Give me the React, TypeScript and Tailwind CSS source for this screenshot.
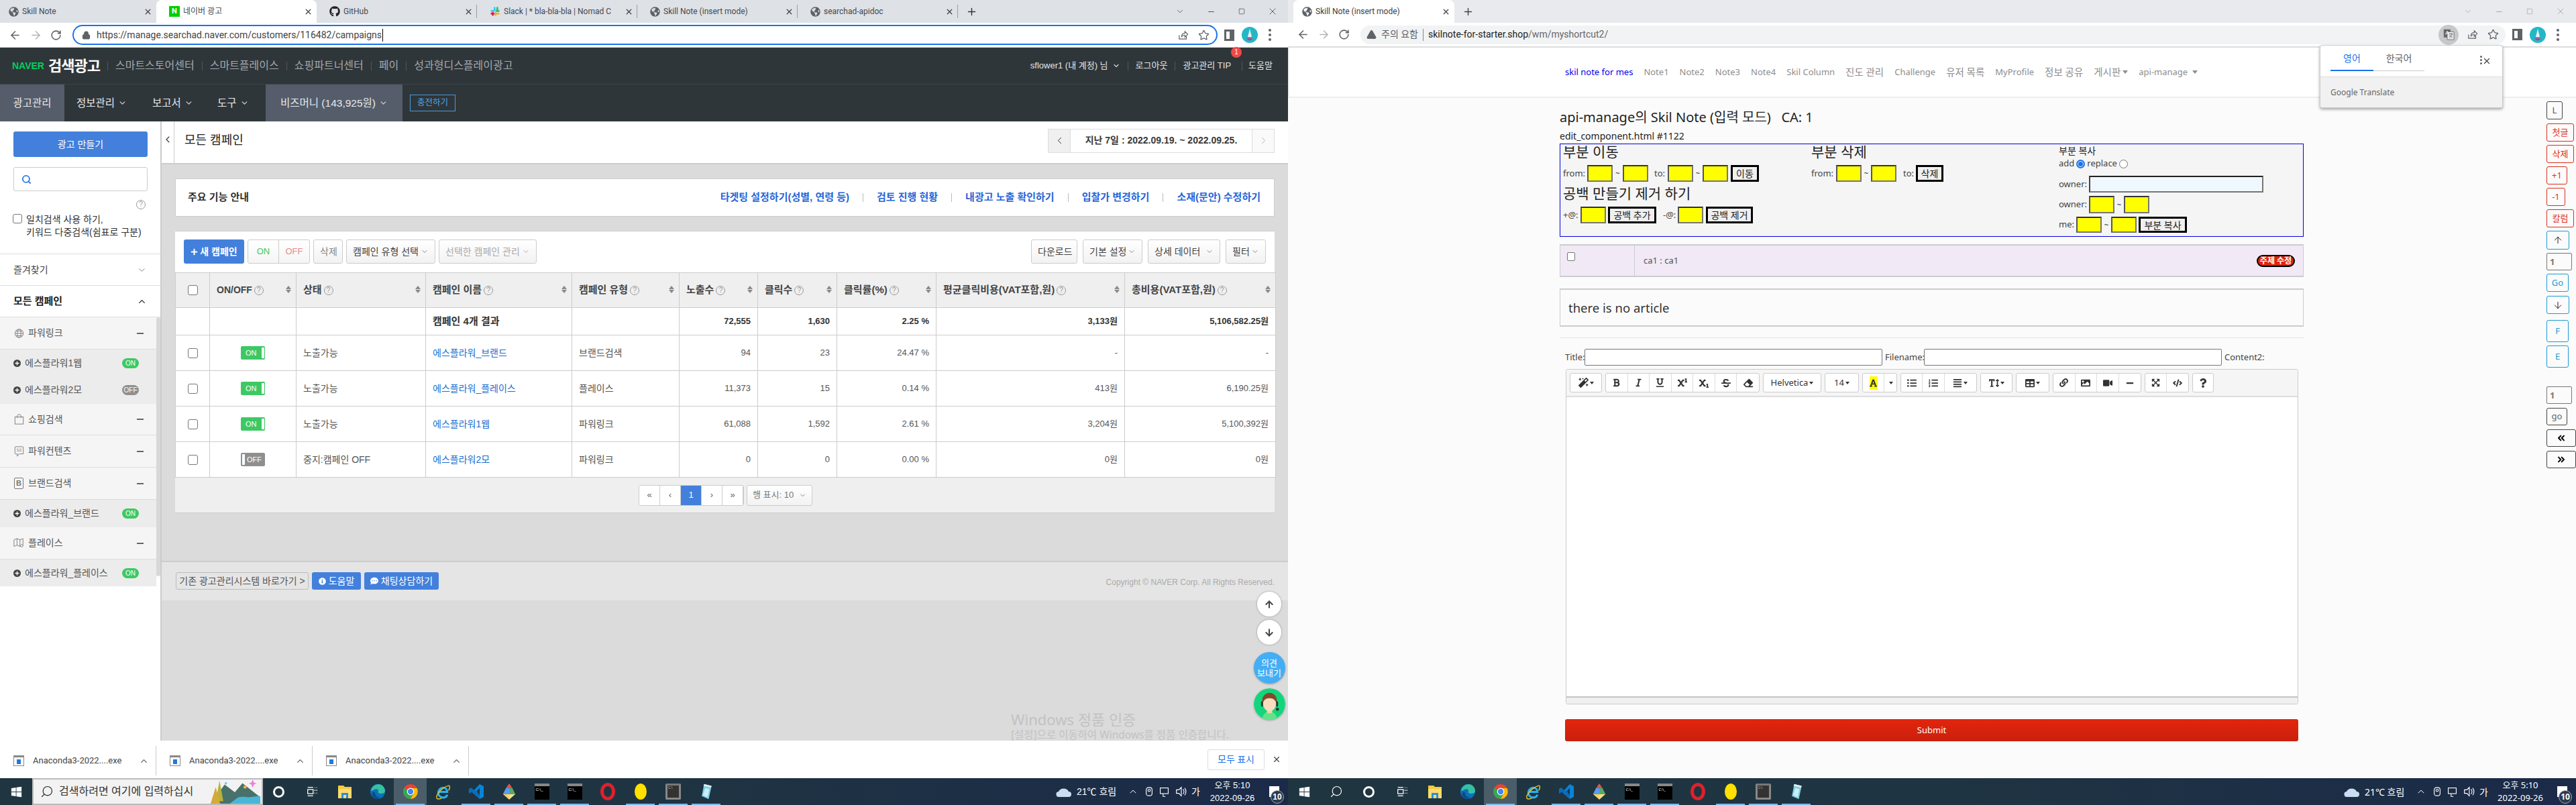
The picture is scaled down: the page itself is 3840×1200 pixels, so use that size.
// App.tsx
import React from 'react';
import { ArrowLeft, ArrowRight, RotateCw, Lock, Star, X, Plus, ChevronDown, ChevronUp, ChevronLeft, ChevronRight, ChevronsLeft, ChevronsRight, Search, TriangleAlert, ArrowUp, ArrowDown, Minus, Square } from 'lucide-react';
import { FaGlobeAmericas, FaGithub, FaMagic, FaBold, FaItalic, FaUnderline, FaSuperscript, FaSubscript, FaStrikethrough, FaEraser, FaFont, FaListUl, FaListOl, FaAlignJustify, FaTextHeight, FaTable, FaLink, FaImage, FaVideo, FaMinus, FaExpandArrowsAlt, FaCode, FaQuestion, FaPlus, FaCommentDots, FaInfoCircle } from 'react-icons/fa';

const Globe = () => <FaGlobeAmericas className="w-[15px] h-[15px] text-[#5f6368] shrink-0" />;

const SlackLogo = () => (
  <svg viewBox="0 0 24 24" className="w-[16px] h-[16px] shrink-0">
    <rect x="9" y="2" width="4" height="9" rx="2" fill="#36c5f0" />
    <rect x="2" y="9" width="9" height="4" rx="2" fill="#36c5f0" />
    <rect x="15" y="2" width="4" height="9" rx="2" fill="#2eb67d" />
    <rect x="13" y="9" width="9" height="4" rx="2" fill="#2eb67d" />
    <rect x="11" y="13" width="4" height="9" rx="2" fill="#ecb22e" />
    <rect x="13" y="15" width="9" height="4" rx="2" fill="#ecb22e" />
    <rect x="5" y="13" width="4" height="9" rx="2" fill="#e01e5a" />
    <rect x="2" y="15" width="9" height="4" rx="2" fill="#e01e5a" />
  </svg>
);

const NaverIcon = () => (
  <span className="w-[16px] h-[16px] bg-[#03cf00] text-white text-[11px] font-bold flex items-center justify-center shrink-0">N</span>
);

const Tab = ({ icon, title, active, sep }: { icon: React.ReactNode; title: string; active?: boolean; sep?: boolean }) => (
  <div className={`relative h-full w-[239px] flex items-center pl-[19px] pr-[6px] gap-[5px] text-[12px] text-[#45494e] ${active ? 'bg-white rounded-t-[8px] text-[#3c4043]' : ''}`}>
    {icon}
    <span className="flex-1 overflow-hidden whitespace-nowrap">{title}</span>
    <X size={13} strokeWidth={2.4} className="text-[#444] shrink-0" />
    {sep && <span className="absolute right-0 top-[7px] h-[20px] w-px bg-[#9aa0a6]" />}
  </div>
);

const WinControls = ({ muted }: { muted?: boolean }) => (
  <div className={`ml-auto flex items-center h-full ${muted ? 'text-[#9a9a9a]' : 'text-[#333]'}`}>
    <span className="w-[46px] flex justify-center"><ChevronDown size={14} strokeWidth={1.2} /></span>
    <span className="w-[46px] flex justify-center"><Minus size={13} strokeWidth={1.5} /></span>
    <span className="w-[46px] flex justify-center"><Square size={10} strokeWidth={1.4} /></span>
    <span className="w-[46px] flex justify-center"><X size={16} strokeWidth={1.1} /></span>
  </div>
);

const Avatar = () => (
  <svg viewBox="0 0 24 24" className="w-[24px] h-[24px] shrink-0">
    <circle cx="12" cy="12" r="12" fill="#22b8c8" />
    <path d="M12 3 L15 15 L9 15 Z" fill="#eef3f0" />
    <path d="M7 17 L17 17 L14 20 L10 20 Z" fill="#c0408a" />
  </svg>
);

const ShareIcon = () => (
  <svg viewBox="0 0 24 24" className="w-[17px] h-[17px] text-[#5f6368]" fill="none" stroke="currentColor" strokeWidth="1.7">
    <path d="M4 12v8h15v-6" />
    <path d="M9 15c0-5 3-7 7-7V4l6 6-6 6v-4c-3 0-5 1-7 3z" />
  </svg>
);

const TranslateIcon = () => (
  <svg viewBox="0 0 20 20" className="w-[17px] h-[17px]">
    <rect x="1" y="1" width="12" height="14" rx="1" fill="#666" />
    <rect x="7" y="5" width="12" height="14" rx="1" fill="#e8e8e8" stroke="#666" />
    <path d="M4 10l3-6 3 6M5 8h4" fill="none" stroke="#fff" strokeWidth="1.1" />
    <path d="M10 9h7M13.5 8v1M16 9c-1 3-3 5-5 6M11 11c1 2 3 3 5 4" fill="none" stroke="#555" strokeWidth="1" />
  </svg>
);

const AddressRight = ({ translate }: { translate?: boolean }) => (
  <div className="flex items-center gap-[14px] pr-[10px] text-[#5f6368]">
    {translate && (
      <span className="w-[30px] h-[30px] -mx-[2px] rounded-full bg-[#c6c8ca] flex items-center justify-center">
        <TranslateIcon />
      </span>
    )}
    <ShareIcon />
    <Star size={17} strokeWidth={1.8} />
  </div>
);

const AddressTail = () => (
  <div className="flex items-center gap-[11px] pl-[10px] pr-[10px] w-[105px] h-full">
    <span className="w-[15px] h-[17px] border-[3px] border-[#5f6368] border-r-[7px] shrink-0" />
    <Avatar />
    <span className="flex flex-col gap-[3px] ml-[5px]">
      <i className="w-[4px] h-[4px] rounded-full bg-[#5f6368]" />
      <i className="w-[4px] h-[4px] rounded-full bg-[#5f6368]" />
      <i className="w-[4px] h-[4px] rounded-full bg-[#5f6368]" />
    </span>
  </div>
);

const NavArrows = () => (
  <div className="flex items-center gap-[12px] pl-[13px] w-[108px] text-[#5f6368]">
    <ArrowLeft size={19} strokeWidth={2} />
    <ArrowRight size={19} strokeWidth={2} className="text-[#b3b5b8]" />
    <RotateCw size={17} strokeWidth={2.2} />
  </div>
);

// ---- taskbar ----
const WinLogo = () => (
  <svg viewBox="0 0 20 20" className="w-[17px] h-[17px]" fill="#fff">
    <path d="M1 3.5 9 2.3V9.5H1zM10 2.1 19 1V9.5H10zM1 10.5H9V17.7L1 16.5zM10 10.5H19V19L10 17.9z" />
  </svg>
);
const TaskView = () => (
  <svg viewBox="0 0 20 20" className="w-[18px] h-[18px]" fill="none" stroke="#fff" strokeWidth="1.4">
    <path d="M3 3h9M3 17h9" /><rect x="3" y="6.5" width="9" height="7" /><path d="M15 3v1M15 7v2M15 12v1M18 3v1M18 7v2M18 12v1" />
  </svg>
);
const Explorer = () => (
  <svg viewBox="0 0 24 24" className="w-[24px] h-[24px]">
    <path d="M2 3h8l2 2h10v17H2z" fill="#f8c93e" />
    <rect x="2" y="8" width="20" height="14" fill="#fcdc73" />
    <rect x="7" y="14" width="10" height="8" fill="#2b8fd8" />
    <rect x="10" y="17" width="4" height="5" fill="#fcdc73" />
  </svg>
);
const Edge = () => (
  <svg viewBox="0 0 24 24" className="w-[24px] h-[24px]">
    <circle cx="12" cy="12" r="11" fill="#0c6fb8" />
    <path d="M2 11C3 4 9 1 13 1c6 0 10 5 10 10 0 3-3 4-6 4-3 0-5-1-4-3 1-3-3-5-6-3-2 1-4 2-5 2z" fill="#36c1a3" />
    <path d="M8 14c0 4 3 7 8 7-2 2-5 2-7 1-4-1-6-5-5-8 1-2 3-2 4 0z" fill="#0b4a8a" />
  </svg>
);
const Chrome = () => (
  <svg viewBox="0 0 24 24" className="w-[24px] h-[24px]">
    <circle cx="12" cy="12" r="11" fill="#ea4335" />
    <path d="M12 12 L2.5 6.5 A11 11 0 0 0 12 23 L17.5 14z" fill="#34a853" />
    <path d="M12 7h9.5A11 11 0 0 1 12 23l5-9z" fill="#fbbc05" />
    <circle cx="12" cy="12" r="5.4" fill="#fff" />
    <circle cx="12" cy="12" r="4.2" fill="#4285f4" />
  </svg>
);
const Gem = () => (
  <svg viewBox="0 0 24 28" className="w-[24px] h-[26px]">
    <path d="M12 1l5 7H7z" fill="#e8514a" />
    <path d="M7 8h5v10H2z" fill="#5b9cf0" />
    <path d="M12 8h5l5 10H12z" fill="#58a866" />
    <path d="M2 18h10v9z" fill="#f5d36b" />
    <path d="M12 18h10l-10 9z" fill="#f0e18e" />
  </svg>
);
const Cmd = () => (
  <span className="w-[22px] h-[24px] bg-black border-t-[4px] border-[#888] flex px-[2px] pt-[2px]">
    <span className="text-[6px] text-white leading-none">C:\_</span>
  </span>
);
const Opera = () => (
  <span className="w-[22px] h-[26px] rounded-[50%] border-[5px] border-[#e0202c]" />
);
const Yellow = () => <span className="w-[18px] h-[24px] rounded-[50%] bg-[#ffe000]" />;
const GrayApp = () => (
  <span className="w-[23px] h-[24px] bg-[#333] rounded-[2px] border-[3px] border-[#888] border-t-[#777] flex p-[1px]">
    <span className="text-[5px] text-[#bbb] leading-none">C:\</span>
  </span>
);
const Notepad = () => (
  <svg viewBox="0 0 24 28" className="w-[24px] h-[24px]">
    <path d="M8 1 L21 4 L16 27 L4 22z" fill="#7fd0e4" />
    <path d="M8 1 L21 4 L20 7 L7 4z" fill="#e8e8e8" />
    <path d="M10 8 L17 10 L14 24 L6 20z" fill="#c9eef6" />
  </svg>
);
const IE = () => (
  <svg viewBox="0 0 24 24" className="w-[25px] h-[25px]" fill="none">
    <path d="M5 12h13c0-4-3-6-6-6s-7 3-7 7 3 7 7 7c3 0 5-1 6-4" stroke="#2ab0ea" strokeWidth="3" />
    <path d="M3 21C1 18 9 6 20 3c2 0 2 3 0 7M3 21c1 2 5 1 7 0" stroke="#f2c21a" strokeWidth="1.4" />
  </svg>
);
const VS = () => (
  <svg viewBox="0 0 24 24" className="w-[24px] h-[26px]">
    <path d="M17 1 23 4V20L17 23 6 13z" fill="#0a84d8" />
    <path d="M17 6.5V17.5L9.5 12zM1 8l3-2 13 11v6L5 12.5 2 15 1 14z" fill="#0a6cbc" />
    <path d="M17 6.5V17.5L13 12z" fill="#1f3540" />
  </svg>
);

const Task = ({ children, run, active }: { children: React.ReactNode; run?: boolean; active?: boolean }) => (
  <div className={`relative w-[49px] h-full flex items-center justify-center shrink-0 ${active ? 'bg-[#4a5d68]' : ''}`}>
    {children}
    {run && <span className="absolute bottom-0 left-[3px] right-[3px] h-[2px] bg-[#76b9ed]" />}
  </div>
);

const TaskApps = () => (
  <>
    <Task><span className="w-[17px] h-[17px] rounded-full border-[3px] border-white" /></Task>
    <Task><TaskView /></Task>
    <Task><Explorer /></Task>
    <Task><Edge /></Task>
    <Task run active><Chrome /></Task>
    <Task><IE /></Task>
    <Task run><VS /></Task>
    <Task run><Gem /></Task>
    <Task run><Cmd /></Task>
    <Task run><Cmd /></Task>
    <Task><Opera /></Task>
    <Task run><Yellow /></Task>
    <Task run><GrayApp /></Task>
    <Task run><Notepad /></Task>
  </>
);

const Tray = () => (
  <div className="ml-auto flex items-center h-full text-white shrink-0 pr-[3px]">
    <svg viewBox="0 0 24 18" className="w-[24px] h-[18px] mr-[7px]" fill="#c9def2"><path d="M5 17a4 4 0 0 1-1-8 8 7 0 0 1 15 0 4 4 0 0 1 0 8z" /></svg>
    <span className="text-[14px] w-[76px] whitespace-nowrap">21℃ 흐림</span>
    <ChevronUp size={16} strokeWidth={1.5} className="mr-[9px]" />
    <svg viewBox="0 0 16 20" className="w-[14px] h-[18px] mr-[7px]" fill="none" stroke="#fff" strokeWidth="1.3"><rect x="3" y="3" width="10" height="14" rx="4" /><circle cx="8" cy="8" r="2" /></svg>
    <svg viewBox="0 0 20 20" className="w-[17px] h-[17px] mr-[7px]" fill="none" stroke="#fff" strokeWidth="1.3"><rect x="3" y="3" width="14" height="10" /><path d="M8 13v5h4" /></svg>
    <svg viewBox="0 0 20 20" className="w-[18px] h-[18px] mr-[7px]" fill="none" stroke="#fff" strokeWidth="1.3"><path d="M3 7h4l4-4v14l-4-4H3zM14 6c2 2 2 6 0 8M16.5 4c3 3 3 9 0 12" /></svg>
    <span className="text-[14px] w-[16px]">가</span>
    <div className="w-[88px] flex flex-col items-center text-[13px] leading-[19px] ml-[1px]">
      <span>오후 5:10</span>
      <span>2022-09-26</span>
    </div>
    <div className="relative w-[36px] h-full flex items-center justify-center">
      <span className="w-[15px] h-[16px] bg-white" />
      <span className="absolute right-[3px] bottom-[2px] w-[20px] h-[20px] rounded-full bg-[#2a3a52] border border-[#aaa] text-[12px] font-bold flex items-center justify-center">10</span>
    </div>
  </div>
);

const Landscape = () => (
  <svg viewBox="0 0 78 40" className="w-[78px] h-[38px] self-end shrink-0">
    <path d="M0 40 L22 10 L38 22 L50 8 L78 30 V40z" fill="#48716b" />
    <path d="M30 40 C45 30 40 28 60 30 L78 28 V40z" fill="#49b6d8" />
    <path d="M8 36 L14 4 L20 36z" fill="#b9b23a" />
    <path d="M0 40 L8 14 L15 40z" fill="#d6a93a" />
    <path d="M66 2l2 5 4 1-4 2-2 5-2-5-4-2 4-1z" fill="#f07be0" />
    <circle cx="54" cy="14" r="2.5" fill="#f1b02e" />
    <circle cx="24" cy="8" r="2" fill="#7cc7f0" />
  </svg>
);

const Bar = ({ children }: { children: React.ReactNode }) => (
  <div className="h-[40px] flex items-stretch bg-gradient-to-r from-[#1f3540] via-[#1f3442] to-[#1b2a48] shrink-0">{children}</div>
);

// ---- left window parts ----
const Q = ({ className = '' }: { className?: string }) => (
  <span className={`inline-flex items-center justify-center w-[14px] h-[14px] rounded-full border border-[#999] text-[#999] text-[10px] font-normal leading-none ${className}`}>?</span>
);

const Sort = () => (
  <span className="absolute right-[7px] top-[19px] flex flex-col gap-[1px]">
    <i className="w-0 h-0 border-x-[4px] border-x-transparent border-b-[5px] border-b-[#888]" />
    <i className="w-0 h-0 border-x-[4px] border-x-transparent border-t-[5px] border-t-[#888]" />
  </span>
);

const Check = () => <span className="block mx-auto w-[15px] h-[15px] border border-[#777] rounded-[3px] bg-white" />;

const Toggle = ({ on }: { on: boolean }) => on ? (
  <span className="mx-auto w-[36px] h-[20px] bg-[#3ec864] rounded-[2px] flex items-center text-white text-[11px] pl-[7px] gap-[3px]">
    ON<i className="w-[4px] h-[16px] bg-white rounded-[1px] ml-auto mr-[1px]" />
  </span>
) : (
  <span className="mx-auto w-[36px] h-[20px] bg-[#8f8f8f] rounded-[2px] flex items-center text-white text-[11px] pl-[2px] gap-[3px]">
    <i className="w-[4px] h-[16px] bg-white rounded-[1px]" />OFF
  </span>
);

const ToolBtn = ({ children, w, muted }: { children: React.ReactNode; w: string; muted?: boolean }) => (
  <div className={`${w} h-[36px] border border-[#ccc] rounded-[3px] bg-gradient-to-b from-white to-[#f2f2f2] flex items-center justify-between px-[9px] text-[14px] shrink-0 ${muted ? 'text-[#aaa]' : 'text-[#444]'}`}>
    {children}
  </div>
);

const Head = ({ children }: { children: React.ReactNode }) => (
  <th className="relative border border-[#ccc] bg-[#efefef] px-[10px] text-[15px] font-bold text-[#444] whitespace-nowrap text-left">
    <span className="inline-flex items-center gap-[3px]">{children}<Q /></span>
    <Sort />
  </th>
);

const rows = [
  { on: true, state: '노출가능', name: '에스플라워_브랜드', type: '브랜드검색', imp: '94', clk: '23', ctr: '24.47 %', avg: '-', cost: '-' },
  { on: true, state: '노출가능', name: '에스플라워_플레이스', type: '플레이스', imp: '11,373', clk: '15', ctr: '0.14 %', avg: '413원', cost: '6,190.25원' },
  { on: true, state: '노출가능', name: '에스플라워1웹', type: '파워링크', imp: '61,088', clk: '1,592', ctr: '2.61 %', avg: '3,204원', cost: '5,100,392원' },
  { on: false, state: '중지:캠페인 OFF', name: '에스플라워2모', type: '파워링크', imp: '0', clk: '0', ctr: '0.00 %', avg: '0원', cost: '0원' },
];

const Td = ({ children, right, bold }: { children?: React.ReactNode; right?: boolean; bold?: boolean }) => (
  <td className={`border border-[#ccc] px-[10px] whitespace-nowrap bg-white ${right ? 'text-right text-[13px]' : 'text-[14px]'} ${bold ? 'font-bold text-[#333]' : 'text-[#555]'}`}>{children}</td>
);

const CampaignTable = () => (
  <table className="w-[1640px] table-fixed border-collapse">
    <colgroup>
      <col className="w-[51px]" /><col className="w-[129px]" /><col className="w-[193px]" /><col className="w-[218px]" /><col className="w-[160px]" />
      <col className="w-[117px]" /><col className="w-[118px]" /><col className="w-[148px]" /><col className="w-[281px]" /><col className="w-[225px]" />
    </colgroup>
    <thead>
      <tr className="h-[52px]">
        <th className="border border-[#ccc] bg-[#efefef]"><Check /></th>
        <Head><span className="text-[14px]">ON/OFF</span></Head><Head>상태</Head><Head>캠페인 이름</Head><Head>캠페인 유형</Head>
        <Head>노출수</Head><Head>클릭수</Head><Head>클릭률(%)</Head><Head>평균클릭비용(VAT포함,원)</Head><Head>총비용(VAT포함,원)</Head>
      </tr>
    </thead>
    <tbody>
      <tr className="h-[41px]">
        <Td /><Td /><Td /><td className="border border-[#ccc] bg-white px-[10px] text-[15px] font-bold text-[#333] whitespace-nowrap">캠페인 4개 결과</td><Td />
        <Td right bold>72,555</Td><Td right bold>1,630</Td><Td right bold>2.25 %</Td><Td right bold>3,133원</Td><Td right bold>5,106,582.25원</Td>
      </tr>
      {rows.map((r) => (
        <tr key={r.name} className="h-[53px]">
          <Td><Check /></Td>
          <td className="border border-[#ccc] bg-white"><div className="flex"><Toggle on={r.on} /></div></td>
          <Td>{r.state}</Td>
          <td className="border border-[#ccc] bg-white px-[10px] text-[14px] text-[#1a6fd0] whitespace-nowrap">{r.name}</td>
          <Td>{r.type}</Td>
          <Td right>{r.imp}</Td><Td right>{r.clk}</Td><Td right>{r.ctr}</Td><Td right>{r.avg}</Td><Td right>{r.cost}</Td>
        </tr>
      ))}
    </tbody>
  </table>
);

const CatIcon = ({ kind }: { kind: string }) => {
  if (kind === 'globe') return <svg viewBox="0 0 16 18" className="w-[15px] h-[16px]" fill="none" stroke="#777"><circle cx="8" cy="9" r="7" /><ellipse cx="8" cy="9" rx="3" ry="7" /><path d="M1 9h14M2 5h12M2 13h12" /></svg>;
  if (kind === 'bag') return <svg viewBox="0 0 16 18" className="w-[15px] h-[16px]" fill="none" stroke="#777"><rect x="1" y="5" width="14" height="12" /><path d="M5 7V3a3 2 0 0 1 6 0v4" /></svg>;
  if (kind === 'note') return <svg viewBox="0 0 16 18" className="w-[15px] h-[16px]" fill="none" stroke="#777"><path d="M2 1h12a1 1 0 0 1 1 1v11H8l-3 4v-4H2a1 1 0 0 1-1-1V2a1 1 0 0 1 1-1z" /><path d="M4 5h3M9 5h3M4 8h8" /></svg>;
  if (kind === 'brand') return <span className="w-[14px] h-[17px] border border-[#777] rounded-[2px] text-[#777] text-[11px] leading-[15px] text-center font-bold">B</span>;
  return <svg viewBox="0 0 18 18" className="w-[17px] h-[16px]" fill="none" stroke="#777"><path d="M1 3l5-2 5 2 5-2v11l-5 2-5-2-5 2zM6 1v11M11 3v11" /><circle cx="14" cy="13" r="2" fill="#fff" /></svg>;
};

const Cat = ({ kind, label, h }: { kind: string; label: string; h: string }) => (
  <div className={`${h} flex items-center pl-[20px] pr-[19px] gap-[6px] border-b border-[#ddd] text-[14px] text-[#555]`}>
    <span className="w-[16px] flex justify-center"><CatIcon kind={kind} /></span>
    <span className="flex-1">{label}</span>
    <span className="w-[10px] h-[2px] bg-[#666]" />
  </div>
);

const Camp = ({ label, on, h }: { label: string; on: boolean; h: string }) => (
  <div className={`${h} flex items-center pl-[20px] pr-[26px] bg-[#ececec] text-[14px] text-[#555]`}>
    <span className="w-[11px] h-[11px] rounded-full bg-[#444] text-white flex items-center justify-center mr-[6px]"><FaPlus className="w-[7px] h-[7px]" /></span>
    <span className="flex-1">{label}</span>
    <span className={`w-[25px] h-[15px] rounded-full text-white text-[10px] leading-[15px] text-center ${on ? 'bg-[#3ec864]' : 'bg-[#8f8f8f]'}`}>{on ? 'ON' : 'OFF'}</span>
  </div>
);

const Sidebar = () => (
  <aside className="w-[241px] shrink-0 bg-white border-r-2 border-[#ccc] h-full">
    <div className="h-[198px] px-[20px] pt-[15px] relative border-b border-[#ddd]">
      <div className="h-[38px] w-[200px] rounded-[3px] bg-[#4280dc] text-white text-[14px] flex items-center justify-center">광고 만들기</div>
      <div className="mt-[15px] h-[36px] w-[200px] rounded-[3px] border border-[#ccc] flex items-center pl-[11px]">
        <Search size={15} strokeWidth={3} className="text-[#2e7be0]" />
      </div>
      <div className="flex justify-end mt-[13px] pr-[2px]"><Q /></div>
      <div className="flex mt-[6px] -ml-[1px]">
        <span className="w-[14px] h-[14px] mt-[1px] border border-[#777] rounded-[3px] shrink-0" />
        <span className="ml-[6px] text-[14px] leading-[19px] text-[#333] whitespace-nowrap">일치검색 사용 하기,<br />키워드 다중검색(쉼표로 구분)</span>
      </div>
    </div>
    <div className="h-[47px] flex items-center justify-between pl-[20px] pr-[20px] border-b border-[#ddd] text-[14px] text-[#444]">
      즐겨찾기<ChevronDown size={15} strokeWidth={1.5} className="text-[#777]" />
    </div>
    <div className="h-[47px] flex items-center justify-between pl-[20px] pr-[20px] border-b border-[#ddd] text-[15px] font-bold text-[#222]">
      모든 캠페인<ChevronUp size={15} strokeWidth={2} className="text-[#222]" />
    </div>
    <div className="flex">
      <div className="w-[234px] bg-[#f5f5f5]">
        <Cat kind="globe" label="파워링크" h="h-[48px]" />
        <Camp label="에스플라워1웹" on h="h-[40px]" />
        <Camp label="에스플라워2모" on={false} h="h-[41px]" />
        <Cat kind="bag" label="쇼핑검색" h="h-[47px]" />
        <Cat kind="note" label="파워컨텐츠" h="h-[48px]" />
        <Cat kind="brand" label="브랜드검색" h="h-[48px]" />
        <Camp label="에스플라워_브랜드" on h="h-[41px]" />
        <Cat kind="map" label="플레이스" h="h-[48px]" />
        <Camp label="에스플라워_플레이스" on h="h-[40px]" />
      </div>
      <div className="w-[6px] h-[386px] bg-[#d8d8d8] rounded-[3px]" />
    </div>
  </aside>
);

const Divider = () => <span className="w-px h-[13px] bg-[#555] mx-[11px]" />;

const Caret = () => <ChevronDown size={13} strokeWidth={2.6} className="ml-[5px] text-[#ccc]" />;

const PageBtn = ({ children, active }: { children: React.ReactNode; active?: boolean }) => (
  <span className={`w-[31px] h-full flex items-center justify-center text-[13px] border-r border-[#ccc] ${active ? 'bg-[#4280dc] text-white' : 'bg-white text-[#666]'}`}>{children}</span>
);

const Bubble = ({ children, className = '' }: { children: React.ReactNode; className?: string }) => (
  <span className={`w-[36px] h-[37px] rounded-full bg-white shadow-[0_0_3px_rgba(0,0,0,0.35)] flex items-center justify-center text-[#444] ${className}`}>{children}</span>
);

const NaverWindow = () => (
  <div className="w-[1920px] h-full flex flex-col shrink-0 font-[family-name:'Liberation_Sans','Noto_Sans_CJK_KR',sans-serif]">
    <div className="h-[34px] bg-[#dee1e6] flex items-end shrink-0 font-[family-name:'Roboto','Noto_Sans_CJK_KR',sans-serif]">
      <div className="-ml-[6px] flex h-full items-stretch">
        <Tab icon={<Globe />} title="Skill Note" />
        <Tab icon={<NaverIcon />} title="네이버 광고" active />
        <Tab icon={<FaGithub className="w-[16px] h-[16px] text-[#222]" />} title="GitHub" sep />
        <Tab icon={<SlackLogo />} title="Slack | * bla-bla-bla | Nomad C" sep />
        <Tab icon={<Globe />} title="Skill Note (insert mode)" sep />
        <Tab icon={<Globe />} title="searchad-apidoc" sep />
      </div>
      <div className="self-center ml-[12px] text-[#333]"><Plus size={17} strokeWidth={2} /></div>
      <WinControls />
    </div>
    <div className="h-[37px] bg-white flex items-center border-b border-[#d8d8d8] shrink-0 font-[family-name:'Roboto','Noto_Sans_CJK_KR',sans-serif]">
      <NavArrows />
      <div className="flex-1 h-[30px] border-2 border-[#1a73e8] rounded-full flex items-center pl-[12px]">
        <Lock size={13} strokeWidth={2.6} className="text-[#5f6368] mr-[9px]" fill="#5f6368" />
        <span className="text-[14px] text-[#444] border-r border-black pr-px leading-[19px]">https://manage.searchad.naver.com/customers/116482/campaigns</span>
        <div className="ml-auto"><AddressRight /></div>
      </div>
      <AddressTail />
    </div>
    <header className="h-[55px] bg-[#2f363a] border-b border-[#3c4347] flex items-center pl-[18px] pr-[23px] shrink-0">
      <span className="text-[#03cf5d] font-[family-name:'Liberation_Sans',sans-serif] font-bold text-[14px] mr-[6px]">NAVER</span>
      <span className="text-white font-bold text-[22px] tracking-[-1px] mr-[11px]">검색광고</span>
      <div className="flex items-center text-[#a4a9ac] text-[16px]">
        <span className="w-px h-[13px] bg-[#555] mr-[11px]" />스마트스토어센터<Divider />스마트플레이스<Divider />쇼핑파트너센터<Divider />페이<Divider />성과형디스플레이광고
      </div>
      <div className="ml-auto flex items-center text-[#e2e4e5] text-[13px]">
        sflower1 (내 계정) 님<ChevronDown size={12} strokeWidth={2.6} className="ml-[6px] text-[#ccc]" /><Divider />로그아웃<Divider />
        <span className="relative mr-[16px]">광고관리 TIP<span className="absolute -right-[16px] -top-[18px] w-[16px] h-[16px] rounded-full bg-[#f04848] text-white text-[10px] leading-[16px] text-center">1</span></span>
        <span className="w-px h-[13px] bg-[#555] mr-[9px]" />도움말
      </div>
    </header>
    <nav className="h-[55px] bg-[#2f363a] flex items-stretch text-[#e8e9ea] text-[15.5px] shrink-0">
      <span className="w-[96px] bg-[#555d6b] flex items-center justify-center">광고관리</span>
      <span className="ml-[18px] w-[103px] flex items-center">정보관리<Caret /></span>
      <span className="ml-[10px] w-[87px] flex items-center">보고서<Caret /></span>
      <span className="w-[72px] ml-[10px] flex items-center">도구<Caret /></span>
      <span className="w-[204px] bg-[#555d6b] flex items-center justify-center whitespace-nowrap">비즈머니 (143,925원)<Caret /></span>
      <span className="ml-[11px] self-center w-[68px] h-[25px] border border-[#4a9bd8] text-[#4fa8e6] text-[12.5px] flex items-center justify-center">충전하기</span>
    </nav>
    <div className="flex h-[923px] shrink-0">
      <Sidebar />
      <main className="relative flex-1 bg-[#dbdbdb] flex flex-col overflow-hidden">
        <div className="h-[64px] bg-white border-b-2 border-[#ccc] flex items-center shrink-0">
          <div className="w-[19px] h-full border-r border-[#ccc] flex items-center justify-center pb-[8px]"><ChevronLeft size={16} strokeWidth={1.6} className="text-[#333]" /></div>
          <h1 className="ml-[15px] pb-[5px] text-[18px] text-[#222]">모든 캠페인</h1>
          <div className="ml-auto mr-[20px] mb-[5px] w-[338px] h-[36px] border border-[#ddd] flex items-stretch">
            <span className="w-[33px] bg-[#f0f0f0] flex items-center justify-center border-r border-[#ddd]"><ChevronLeft size={17} strokeWidth={1.4} className="text-[#333]" /></span>
            <span className="flex-1 flex items-center justify-center text-[14px] font-bold text-[#3a3a3a]">지난 7일 : 2022.09.19. ~ 2022.09.25.</span>
            <span className="w-[33px] bg-[#fafafa] flex items-center justify-center border-l border-[#ddd]"><ChevronRight size={17} strokeWidth={1.2} className="text-[#aaa]" /></span>
          </div>
        </div>
        <section className="mx-[20px] mt-[21px] h-[57px] bg-white border border-[#ccc] rounded-[2px] flex items-center pl-[18px] pr-[20px] shrink-0">
          <span className="text-[15px] font-bold text-[#333]">주요 기능 안내</span>
          <div className="ml-auto flex items-center text-[15px] font-bold text-[#2866d8]">
            타겟팅 설정하기(성별, 연령 등)
            <span className="w-px h-[13px] bg-[#bbb] mx-[20px]" />검토 진행 현황
            <span className="w-px h-[13px] bg-[#bbb] mx-[20px]" />내광고 노출 확인하기
            <span className="w-px h-[13px] bg-[#bbb] mx-[20px]" />입찰가 변경하기
            <span className="w-px h-[13px] bg-[#bbb] mx-[20px]" />소재(문안) 수정하기
          </div>
        </section>
        <section className="mx-[20px] mt-[21px] bg-[#efefef] border-t border-b border-[#ccc] rounded-[2px] shrink-0">
          <div className="h-[61px] bg-white flex items-start pt-[12px] pl-[13px] pr-[13px] gap-[5px]">
            <div className="w-[90px] h-[36px] rounded-[3px] bg-[#4280dc] text-white text-[14px] font-bold flex items-center justify-center gap-[3px] shrink-0"><FaPlus className="w-[11px] h-[11px]" />새 캠페인</div>
            <div className="w-[93px] h-[36px] border border-[#ccc] rounded-[3px] bg-gradient-to-b from-white to-[#f5f5f5] flex text-[13px] shrink-0">
              <span className="w-[46px] border-r border-[#ccc] text-[#3ec864] flex items-center justify-center">ON</span>
              <span className="flex-1 text-[#e98a8a] flex items-center justify-center">OFF</span>
            </div>
            <ToolBtn w="w-[44px]" muted><span className="mx-auto text-[#888] whitespace-nowrap">삭제</span></ToolBtn>
            <ToolBtn w="w-[133px]"><span className="whitespace-nowrap">캠페인 유형 선택</span><ChevronDown size={12} strokeWidth={2} className="text-[#888]" /></ToolBtn>
            <ToolBtn w="w-[146px]" muted><span className="whitespace-nowrap">선택한 캠페인 관리</span><ChevronDown size={12} strokeWidth={2} /></ToolBtn>
            <div className="ml-auto flex gap-[8px]">
              <ToolBtn w="w-[69px]"><span className="mx-auto whitespace-nowrap">다운로드</span></ToolBtn>
              <ToolBtn w="w-[89px]"><span className="whitespace-nowrap">기본 설정</span><ChevronDown size={12} strokeWidth={2} className="text-[#888]" /></ToolBtn>
              <ToolBtn w="w-[108px]"><span className="whitespace-nowrap">상세 데이터</span><ChevronDown size={12} strokeWidth={2} className="text-[#888]" /></ToolBtn>
              <ToolBtn w="w-[60px]"><span className="whitespace-nowrap">필터</span><ChevronDown size={12} strokeWidth={2} className="text-[#888]" /></ToolBtn>
            </div>
          </div>
          <CampaignTable />
          <div className="h-[52px] flex items-center pl-[691px]">
            <div className="h-[31px] flex border border-[#ccc] rounded-[3px] overflow-hidden">
              <PageBtn>«</PageBtn><PageBtn>‹</PageBtn><PageBtn active>1</PageBtn><PageBtn>›</PageBtn><PageBtn>»</PageBtn>
            </div>
            <div className="ml-[4px] w-[98px] h-[31px] border border-[#ccc] rounded-[3px] bg-gradient-to-b from-white to-[#f2f2f2] flex items-center justify-between px-[8px] text-[13px] text-[#777] whitespace-nowrap">
              행 표시: 10<ChevronDown size={11} strokeWidth={2} />
            </div>
          </div>
        </section>
        <footer className="mt-[71px] h-[59px] bg-[#e5e5e5] border-t-2 border-[#ccc] flex items-start pt-[15px] pl-[21px] pr-[20px] gap-[5px] shrink-0">
          <div className="w-[198px] h-[26px] border border-[#bbb] rounded-[3px] flex items-center justify-center text-[14px] text-[#555] whitespace-nowrap">기존 광고관리시스템 바로가기 &gt;</div>
          <div className="w-[73px] h-[26px] rounded-[3px] bg-[#4280dc] text-white text-[14px] flex items-center justify-center gap-[4px]"><FaInfoCircle className="w-[11px] h-[11px]" />도움말</div>
          <div className="w-[111px] h-[26px] rounded-[3px] bg-[#4280dc] text-white text-[14px] flex items-center justify-center gap-[4px]"><FaCommentDots className="w-[12px] h-[12px]" />채팅상담하기</div>
          <span className="ml-auto mt-[6px] text-[12px] text-[#aaa]">Copyright © NAVER Corp. All Rights Reserved.</span>
        </footer>
        <div className="absolute left-[1266px] top-[878px] text-[#c2c2c2] whitespace-nowrap font-[family-name:'Noto_Sans','Noto_Sans_CJK_KR',sans-serif]">
          <div className="text-[22px] leading-[27px]">Windows 정품 인증</div>
          <div className="text-[15.5px] leading-[18px]">[설정]으로 이동하여 Windows를 정품 인증합니다.</div>
        </div>
        <div className="absolute right-[4px] top-[701px] w-[48px] flex flex-col items-center">
          <Bubble><ArrowUp size={16} strokeWidth={3} /></Bubble>
          <Bubble className="mt-[5px]"><ArrowDown size={16} strokeWidth={3} /></Bubble>
          <span className="mt-[11px] w-[47px] h-[47px] rounded-full bg-[#44aef5] text-white text-[13px] leading-[15px] text-center flex items-center justify-center shadow-[0_1px_3px_rgba(0,0,0,0.3)]">의견<br />보내기</span>
          <svg viewBox="0 0 48 48" className="mt-[7px] w-[47px] h-[47px] rounded-full shadow-[0_1px_3px_rgba(0,0,0,0.3)]">
            <circle cx="24" cy="24" r="24" fill="#13d67c" />
            <path d="M13 48c0-9 5-12 11-12s11 3 11 12z" fill="#63e28a" />
            <rect x="20" y="30" width="8" height="8" fill="#f3d0a6" />
            <ellipse cx="24" cy="23" rx="10" ry="12" fill="#f8dcc0" />
            <path d="M13 24C11 12 18 7 24 7s13 5 11 17c-2-6-5-9-11-9s-9 3-11 9z" fill="#85492a" />
            <rect x="11" y="20" width="3" height="8" rx="1.5" fill="#333" /><rect x="34" y="20" width="3" height="8" rx="1.5" fill="#333" />
            <circle cx="36" cy="32" r="2.4" fill="#333" />
          </svg>
        </div>
      </main>
    </div>
    <div className="h-[56px] bg-white flex items-center shrink-0 font-[family-name:'Roboto','Noto_Sans_CJK_KR',sans-serif]">
      {[0, 1, 2].map((i) => (
        <div key={i} className="w-[233px] h-[44px] mt-[4px] pl-[20px] flex items-center border-r border-[#ccc] shrink-0 text-[13px] text-[#444]">
          <span className="w-[16px] h-[16px] border border-[#888] border-t-[3px] bg-white flex items-center justify-center mr-[13px] shrink-0"><i className="w-[6px] h-[7px] bg-[#1f7ad8]" /></span>
          <span className="w-[144px] whitespace-nowrap">Anaconda3-2022....exe</span>
          <ChevronUp size={15} strokeWidth={2.2} className="text-[#666] ml-[14px]" />
        </div>
      ))}
      <div className="ml-auto flex items-center pr-[10px]">
        <span className="w-[85px] h-[31px] border border-[#dadce0] rounded-[3px] text-[#1a73e8] text-[14px] flex items-center justify-center">모두 표시</span>
        <X size={14} strokeWidth={2} className="ml-[11px] text-[#444]" />
      </div>
    </div>
    <Bar>
      <div className="w-[48px] flex items-center justify-center"><WinLogo /></div>
      <div className="w-[344px] bg-[#f2f2f2] border-2 border-[#bbb] flex items-center overflow-hidden">
        <Search size={20} strokeWidth={1.4} className="ml-[10px] mr-[8px] text-[#222] -scale-x-100" />
        <span className="text-[16px] text-[#333] flex-1 whitespace-nowrap">검색하려면 여기에 입력하십시</span>
        <Landscape />
      </div>
      <div className="flex -ml-px"><TaskApps /></div>
      <Tray />
    </Bar>
  </div>
);

// ---- right window parts ----
const Yel = ({ className = 'w-[38px]' }: { className?: string }) => (
  <input className={`${className} h-full bg-[#ffff00] border-2 border-[#767676] border-t-[#333] border-l-[#555]`} />
);
const Blk = ({ children, w }: { children: React.ReactNode; w: string }) => (
  <button type="button" className={`${w} h-full border-[3px] border-black bg-[#efefef] text-[14px] flex items-center justify-center whitespace-nowrap shrink-0`}>{children}</button>
);
const Lbl = ({ children, className = '' }: { children: React.ReactNode; className?: string }) => (
  <span className={`text-[13px] text-[#444] whitespace-nowrap ${className}`}>{children}</span>
);

const FloatBtn = ({ children, w, h = 'h-[27px]', color }: { children: React.ReactNode; w: string; h?: string; color: string }) => (
  <div className={`${w} ${h} ${color} border rounded-[3px] flex items-center justify-center text-[13px]`}>{children}</div>
);

const ToolGroup = ({ children, w }: { children: React.ReactNode; w: string }) => (
  <div className={`${w} h-full bg-white border border-[#ccc] rounded-[3px] flex shrink-0 text-[#333]`}>{children}</div>
);
const Cell = ({ children, w = 'w-[33px]', last }: { children: React.ReactNode; w?: string; last?: boolean }) => (
  <span className={`${w} h-full flex items-center justify-center text-[13px] ${last ? '' : 'border-r border-[#ddd]'}`}>{children}</span>
);
const Tri = () => <i className="ml-[2px] w-0 h-0 border-x-[3px] border-x-transparent border-t-[4px] border-t-[#333]" />;

const EditorToolbar = () => (
  <div className="h-[41px] bg-[#f5f5f5] border-b-2 border-[#ddd] flex items-center pl-[5px] py-[5px] gap-[5px]">
    <ToolGroup w="w-[48px]"><Cell w="w-full" last><FaMagic className="w-[15px] h-[15px]" /><Tri /></Cell></ToolGroup>
    <ToolGroup w="w-[230px]">
      <Cell><FaBold className="w-[13px] h-[13px]" /></Cell>
      <Cell><FaItalic className="w-[13px] h-[13px]" /></Cell>
      <Cell><FaUnderline className="w-[13px] h-[13px]" /></Cell>
      <Cell><FaSuperscript className="w-[14px] h-[14px]" /></Cell>
      <Cell><FaSubscript className="w-[14px] h-[14px]" /></Cell>
      <Cell><FaStrikethrough className="w-[14px] h-[14px]" /></Cell>
      <Cell last><FaEraser className="w-[14px] h-[14px]" /></Cell>
    </ToolGroup>
    <ToolGroup w="w-[87px]"><Cell w="w-full" last>Helvetica<Tri /></Cell></ToolGroup>
    <ToolGroup w="w-[51px]"><Cell w="w-full" last>14<Tri /></Cell></ToolGroup>
    <ToolGroup w="w-[52px]">
      <Cell w="w-[33px]"><span className="bg-[#ffff00] w-[12px] h-[20px] flex items-center justify-center"><FaFont className="w-[11px] h-[14px]" /></span></Cell>
      <Cell w="w-[18px]" last><Tri /></Cell>
    </ToolGroup>
    <ToolGroup w="w-[114px]">
      <Cell><FaListUl className="w-[14px] h-[14px]" /></Cell>
      <Cell><FaListOl className="w-[14px] h-[14px]" /></Cell>
      <Cell w="w-[48px]" last><FaAlignJustify className="w-[14px] h-[14px]" /><Tri /></Cell>
    </ToolGroup>
    <ToolGroup w="w-[48px]"><Cell w="w-full" last><FaTextHeight className="w-[15px] h-[14px]" /><Tri /></Cell></ToolGroup>
    <ToolGroup w="w-[50px]"><Cell w="w-full" last><FaTable className="w-[14px] h-[14px]" /><Tri /></Cell></ToolGroup>
    <ToolGroup w="w-[132px]">
      <Cell><FaLink className="w-[13px] h-[13px]" /></Cell>
      <Cell><FaImage className="w-[14px] h-[14px]" /></Cell>
      <Cell><FaVideo className="w-[14px] h-[14px]" /></Cell>
      <Cell last><FaMinus className="w-[12px] h-[12px]" /></Cell>
    </ToolGroup>
    <ToolGroup w="w-[66px]">
      <Cell><FaExpandArrowsAlt className="w-[13px] h-[13px]" /></Cell>
      <Cell last><FaCode className="w-[14px] h-[14px]" /></Cell>
    </ToolGroup>
    <ToolGroup w="w-[32px]"><Cell w="w-full" last><FaQuestion className="w-[12px] h-[14px]" /></Cell></ToolGroup>
  </div>
);

const NoteWindow = () => (
  <div className="relative w-[1920px] h-full flex flex-col shrink-0 font-[family-name:'Noto_Sans','Noto_Sans_CJK_KR',sans-serif]">
    <div className="h-[34px] bg-[#e8eaed] flex shrink-0 font-[family-name:'Roboto','Noto_Sans_CJK_KR',sans-serif]">
      <div className="ml-[8px] w-[240px] bg-white rounded-t-[8px] flex items-center pl-[13px] pr-[6px] gap-[5px] text-[12px] text-[#3c4043]">
        <Globe /><span className="flex-1">Skill Note (insert mode)</span><X size={13} strokeWidth={2.4} className="text-[#444]" />
      </div>
      <div className="self-center ml-[12px] text-[#444]"><Plus size={17} strokeWidth={2} /></div>
      <WinControls muted />
    </div>
    <div className="h-[37px] bg-white flex items-center border-b-2 border-[#dcdcdc] shrink-0 font-[family-name:'Roboto','Noto_Sans_CJK_KR',sans-serif]">
      <NavArrows />
      <div className="flex-1 h-[28px] bg-[#f1f3f4] rounded-full flex items-center pl-[9px]">
        <TriangleAlert size={15} strokeWidth={2.4} className="text-[#5f6368] mr-[7px]" fill="#5f6368" />
        <span className="text-[14px] text-[#5f6368]">주의 요함</span>
        <span className="w-px h-[18px] bg-[#888] mx-[7px]" />
        <span className="text-[14px] text-[#222]">skilnote-for-starter.shop</span>
        <span className="text-[14px] text-[#666]">/wm/myshortcut2/</span>
        <div className="ml-auto"><AddressRight translate /></div>
      </div>
      <AddressTail />
    </div>
    <div className="flex-1 bg-[#fbfbfb] flex flex-col min-h-0">
      <div className="h-[75px] bg-white border-b-2 border-[#eee] border-l-2 border-l-[#eee] flex items-center pl-[411px] gap-[16px] text-[13px] text-[#8d8d8d] shrink-0">
        <span className="text-[#0000f0]">skil note for mes</span>
        <span>Note1</span><span>Note2</span><span>Note3</span><span>Note4</span><span>Skil Column</span><span className="text-[14.5px]">진도 관리</span><span>Challenge</span><span className="text-[14.5px]">유저 목록</span><span>MyProfile</span><span className="text-[14.5px]">정보 공유</span>
        <span className="flex items-center text-[14.5px]">게시판<i className="ml-[3px] w-0 h-0 border-x-[4px] border-x-transparent border-t-[5px] border-t-[#8d8d8d]" /></span>
        <span className="flex items-center">api-manage<i className="ml-[7px] w-0 h-0 border-x-[4px] border-x-transparent border-t-[5px] border-t-[#8d8d8d]" /></span>
      </div>
      <div className="flex pl-[405px] flex-1 min-h-0">
        <div className="w-[1109px] shrink-0 flex flex-col">
          <h1 className="mt-[15px] h-[28px] text-[20px] leading-[28px] text-[#222] whitespace-pre">api-manage의 Skil Note (입력 모드)   CA: 1</h1>
          <div className="mt-[4px] h-[20px] text-[14px] leading-[20px] text-[#222]">edit_component.html #1122</div>
          <div className="mt-px h-[139px] border border-[#0000e0] bg-[#f5f5f5] grid grid-cols-3 text-[#222]">
            <div className="pl-[4px]">
              <div className="h-[22px] text-[21px] leading-[22px]">부분 이동</div>
              <div className="mt-[9px] h-[25px] flex items-center">
                <Lbl className="w-[36px]">from:</Lbl><Yel /><span className="w-[15px] text-center text-[11px]">~</span><Yel /><Lbl className="ml-[9px] w-[20px]">to:</Lbl><Yel /><span className="w-[14px] text-center text-[11px]">~</span><Yel /><span className="w-[4px]" /><Blk w="w-[42px]">이동</Blk>
              </div>
              <div className="mt-[6px] h-[22px] text-[21px] leading-[22px]">공백 만들기 제거 하기</div>
              <div className="mt-[9px] h-[25px] flex items-center">
                <Lbl className="w-[26px]">+@:</Lbl><Yel /><span className="w-[3px]" /><Blk w="w-[72px]">공백 추가</Blk><Lbl className="ml-[10px] w-[22px]">-@:</Lbl><Yel /><span className="w-[4px]" /><Blk w="w-[70px]">공백 제거</Blk>
              </div>
            </div>
            <div className="pl-[5px]">
              <div className="h-[22px] text-[21px] leading-[22px]">부분 삭제</div>
              <div className="mt-[9px] h-[25px] flex items-center">
                <Lbl className="w-[37px]">from:</Lbl><Yel /><span className="w-[14px] text-center text-[11px]">~</span><Yel /><Lbl className="ml-[10px] w-[19px]">to:</Lbl><Blk w="w-[41px]">삭제</Blk>
              </div>
            </div>
            <div className="pl-[5px]">
              <div className="h-[20px] text-[14px] leading-[20px]">부분 복사</div>
              <div className="h-[18px] flex items-center text-[13px] text-[#444] gap-[3px]">
                add<span className="w-[13px] h-[13px] rounded-full border-2 border-[#1a73e8] bg-[#1a73e8] ring-1 ring-inset ring-white" />
                replace<span className="w-[13px] h-[13px] rounded-full border border-[#777] bg-white" />
              </div>
              <div className="mt-[9px] h-[25px] flex items-center">
                <Lbl className="w-[45px]">owner:</Lbl><input className="w-[260px] h-full bg-[#f0f8ff] border-2 border-[#767676] border-t-[#222] border-l-[#444]" />
              </div>
              <div className="mt-[5px] h-[26px] flex items-center">
                <Lbl className="w-[45px]">owner:</Lbl><Yel /><span className="w-[14px] text-center text-[11px]">~</span><Yel />
              </div>
              <div className="mt-[5px] h-[24px] flex items-center">
                <Lbl className="w-[26px]">me:</Lbl><Yel /><span className="w-[14px] text-center text-[11px]">~</span><Yel /><span className="w-[3px]" /><Blk w="w-[72px]">부분 복사</Blk>
              </div>
            </div>
          </div>
          <div className="mt-[11px] h-[49px] bg-[#f1e9f6] border-y-2 border-x border-[#ccc] flex items-stretch text-[13px] text-[#555]">
            <div className="w-[111px] border-r border-[#ccc] pl-[10px] pt-[10px]"><span className="block w-[12px] h-[13px] border border-[#777] rounded-[2px] bg-white" /></div>
            <span className="pl-[13px] self-center">ca1 : ca1</span>
            <span className="ml-auto mr-[12px] self-center w-[57px] h-[18px] rounded-full bg-[#dd2410] border-2 border-black text-white text-[12px] font-bold flex items-center justify-center whitespace-nowrap">주제 수정</span>
          </div>
          <div className="mt-[17px] h-[57px] border border-[#ccc] border-y-2 pl-[12px] flex items-start pt-[13px] text-[18.5px] text-[#333]">there is no article</div>
          <div className="mt-[16px] h-px bg-[#e4e4e4]" />
          <div className="mt-[16px] h-[25px] flex items-center text-[13px] text-[#444] pl-[8px]">
            <span className="w-[29px]">Title:</span><input className="w-[444px] h-full bg-white border border-[#767676] rounded-[2px]" />
            <span className="ml-[4px] w-[58px]">Filename:</span><input className="w-[444px] h-full bg-white border border-[#767676] rounded-[2px]" />
            <span className="ml-[4px]">Content2:</span>
          </div>
          <div className="mt-[5px] ml-[9px] w-[1092px] h-[500px] border border-[#ccc] rounded-[3px] flex flex-col overflow-hidden">
            <EditorToolbar />
            <div className="flex-1 bg-white" />
            <div className="h-[11px] bg-[#f0f0f0] border-t-2 border-[#c4c4c4]" />
          </div>
          <button type="button" className="mt-[22px] ml-[8px] w-[1093px] h-[33px] rounded-[3px] bg-gradient-to-b from-[#e3250e] to-[#c9200c] text-white text-[13px]">Submit</button>
        </div>
        <aside className="ml-[362px] pt-[5px] flex flex-col items-start text-[12px] shrink-0">
          <FloatBtn w="w-[24px]" color="border-[#444] text-[#555]">L</FloatBtn>
          <div className="mt-[6px] flex flex-col gap-[5px] text-[#e0311c]">
            <FloatBtn w="w-[41px]" color="border-[#d9301c]">첫글</FloatBtn>
            <FloatBtn w="w-[41px]" color="border-[#d9301c]">삭제</FloatBtn>
            <FloatBtn w="w-[31px]" color="border-[#d9301c]">+1</FloatBtn>
            <FloatBtn w="w-[28px]" color="border-[#d9301c]">-1</FloatBtn>
            <FloatBtn w="w-[41px]" color="border-[#d9301c]">칼럼</FloatBtn>
          </div>
          <FloatBtn w="w-[34px]" h="h-[28px] mt-[5px]" color="border-[#1b9bd8] text-black"><ArrowUp size={16} strokeWidth={1.3} /></FloatBtn>
          <input defaultValue="1" className="mt-[5px] w-[38px] h-[26px] px-[4px] border border-[#777] rounded-[2px] text-[13px] text-[#777] font-bold" />
          <FloatBtn w="w-[33px]" h="h-[27px] mt-[5px]" color="border-[#1b9bd8] text-[#1b9bd8]">Go</FloatBtn>
          <FloatBtn w="w-[34px]" h="h-[27px] mt-[6px]" color="border-[#1b9bd8] text-black"><ArrowDown size={16} strokeWidth={1.3} /></FloatBtn>
          <FloatBtn w="w-[33px]" h="h-[33px] mt-[9px]" color="border-[#1b9bd8] text-[#1b9bd8]">F</FloatBtn>
          <FloatBtn w="w-[33px]" h="h-[33px] mt-[5px]" color="border-[#1b9bd8] text-[#1b9bd8]">E</FloatBtn>
          <input defaultValue="1" className="mt-[28px] w-[38px] h-[26px] px-[4px] border border-[#777] rounded-[2px] text-[13px] text-[#777] font-bold" />
          <FloatBtn w="w-[31px]" h="h-[26px] mt-[6px]" color="border-[#444] text-[#666]">go</FloatBtn>
          <FloatBtn w="w-[44px]" h="h-[26px] mt-[6px]" color="border-[#444] text-black"><ChevronsLeft size={16} strokeWidth={3} /></FloatBtn>
          <FloatBtn w="w-[44px]" h="h-[26px] mt-[6px]" color="border-[#444] text-black"><ChevronsRight size={16} strokeWidth={3} /></FloatBtn>
        </aside>
      </div>
    </div>
    <Bar>
      <div className="w-[48px] flex items-center justify-center"><WinLogo /></div>
      <div className="w-[48px] flex items-center justify-center"><Search size={20} strokeWidth={1.4} className="text-white -scale-x-100" /></div>
      <TaskApps />
      <Tray />
    </Bar>
    {/* translate popup */}
    <div className="absolute left-[1538px] top-[67px] w-[273px] h-[94px] bg-white border border-[#ccc] rounded-[4px] shadow-[0_2px_4px_rgba(0,0,0,0.35)] flex flex-col overflow-hidden">
      <div className="h-[47px] flex items-stretch pl-[15px] border-b border-[#ddd] relative">
        <div className="w-[64px] flex items-center justify-center text-[14px] text-[#1a73e8] border-b-2 border-[#1a73e8] h-[38px]">영어</div>
        <div className="w-[76px] flex items-center justify-center text-[14px] text-[#5f6368] border-b border-[#ccc] h-[38px]">한국어</div>
        <span className="absolute right-[30px] top-[15px] flex flex-col gap-[2px]">
          <i className="w-[3px] h-[3px] rounded-full bg-[#5f6368]" /><i className="w-[3px] h-[3px] rounded-full bg-[#5f6368]" /><i className="w-[3px] h-[3px] rounded-full bg-[#5f6368]" />
        </span>
        <X size={14} strokeWidth={2.2} className="absolute right-[16px] top-[16px] text-[#444]" />
      </div>
      <div className="flex-1 bg-[#f1f1f1] flex items-center pl-[15px] text-[12px] text-[#666]">Google Translate</div>
    </div>
  </div>
);

export default function App() {
  return (
    <div className="w-[3840px] h-[1200px] flex overflow-hidden bg-white">
      <NaverWindow />
      <NoteWindow />
    </div>
  );
}
